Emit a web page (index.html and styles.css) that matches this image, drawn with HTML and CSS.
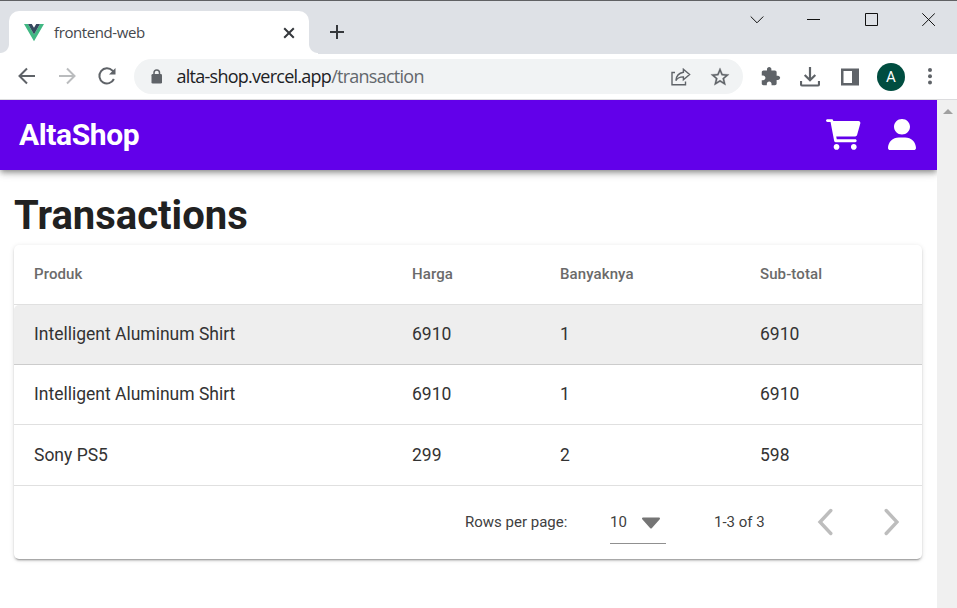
FILE: index.html
```html
<!DOCTYPE html>
<html lang="en">
<head>
<meta charset="utf-8">
<title>frontend-web</title>
<link rel="stylesheet" href="styles.css">
</head>
<body>
<div class="window">
  <div class="tabstrip">
    <div class="tab">
      <svg class="favicon" width="20" height="18" viewBox="0 0 20 18"><path fill="#41b883" d="M0 0h4l6 10.400 6-10.400h4L10 17.300z"/><path fill="#35495e" d="M4 0h3.800L10 3.800 12.200 0H16l-6 10.400z"/></svg>
      <span class="tab-title">frontend-web</span>
      <svg class="tab-close" width="12" height="12" viewBox="0 0 12 12"><path d="M1.200 1.200l9.600 9.600m0-9.600l-9.600 9.600" stroke="#35383c" stroke-width="2" fill="none"/></svg>
    </div>
    <svg class="new-tab" width="16" height="16" viewBox="0 0 16 16"><path d="M8 1v14M1 8h14" stroke="#35383c" stroke-width="2"/></svg>
    <div class="controls">
      <svg width="14" height="14" viewBox="0 0 14 14"><path d="M.7 4.500L7 10.800l6.300-6.300"/></svg>
      <svg width="14" height="14" viewBox="0 0 14 14"><path d="M0 7.500h13"/></svg>
      <svg width="14" height="14" viewBox="0 0 14 14"><path d="M1.500 1.500h12v12h-12z"/></svg>
      <svg width="14" height="14" viewBox="0 0 14 14"><path d="M1.300 1.300l12.600 12.600m0-12.600L1.300 13.900"/></svg>
    </div>
  </div>

  <div class="toolbar">
    <div class="nav">
      <svg width="24" height="24" viewBox="0 0 24 24"><path d="M20 12H5M12 4.500L4.500 12l7.500 7.500"/></svg>
      <svg class="off" width="24" height="24" viewBox="0 0 24 24"><path d="M4 12h15M12 4.500l7.500 7.500-7.500 7.500"/></svg>
      <svg width="24" height="24" viewBox="0 0 24 24"><path d="M18.900 15A7.600 7.600 0 1 1 17.500 6.600L19 8.300"/><path class="solid" d="M20.500 4v6.500H14z"/></svg>
    </div>
    <div class="omnibox">
      <svg class="lock" width="12" height="15" viewBox="0 0 12 15"><rect x=".5" y="5" width="10.500" height="9.500" rx="1.300" fill="#5f6368"/><path d="M3 5.500V3.700a2.750 2.750 0 0 1 5.500 0v1.800" fill="none" stroke="#5f6368" stroke-width="1.500"/></svg>
      <span class="url"><b>alta-shop.vercel.app</b>/transaction</span>
      <svg class="share" width="20" height="18" viewBox="0 0 20 18"><path d="M4 4.500H1v12.200h13.500V13.500"/><path d="M12.400 1.200l6.200 5.300-6.200 5.300V8.900c-3.600-.1-5.800 1-7.500 3.600.4-4.500 2.800-7.400 7.500-8.200z"/></svg>
      <svg class="star" width="22" height="22" viewBox="0 0 24 24"><path fill="#5f6368" stroke="#5f6368" stroke-width=".3" d="M22 9.240l-7.190-.62L12 2 9.190 8.630 2 9.240l5.460 4.730L5.820 21 12 17.270 18.180 21l-1.630-7.030L22 9.240zM12 15.400l-3.760 2.270 1-4.280-3.320-2.880 4.380-.38L12 6.100l1.710 4.040 4.380.38-3.320 2.880 1 4.280L12 15.400z"/></svg>
    </div>
    <div class="extras">
      <svg width="21" height="21" viewBox="0 0 24 24"><path fill="#5f6368" d="M20.500 11H19V7c0-1.100-.9-2-2-2h-4V3.500C13 2.120 11.880 1 10.500 1S8 2.120 8 3.500V5H4c-1.100 0-1.990.9-1.990 2v3.800H3.500c1.490 0 2.700 1.210 2.700 2.700s-1.210 2.700-2.700 2.700H2V20c0 1.100.9 2 2 2h3.800v-1.500c0-1.490 1.210-2.700 2.700-2.700s2.700 1.210 2.700 2.700V22H17c1.100 0 2-.9 2-2v-4h1.500c1.380 0 2.500-1.120 2.500-2.500S21.880 11 20.500 11z"/></svg>
      <svg width="20" height="20" viewBox="0 0 20 20"><path d="M10 0v13M4.700 8l5.300 5.300L15.300 8M1 14v3.200q0 1.300 1.300 1.300h15.400q1.300 0 1.300-1.300V14" fill="none" stroke="#5f6368" stroke-width="2.200"/></svg>
      <svg width="18" height="18" viewBox="0 0 18 18"><path fill="#5f6368" fill-rule="evenodd" d="M0 .5h18v17H0zM2.500 3v12H11V3z"/></svg>
      <span class="avatar">A</span>
      <svg width="6" height="18" viewBox="0 0 6 18"><g fill="#5f6368"><circle cx="3" cy="2" r="2"/><circle cx="3" cy="8.200" r="2"/><circle cx="3" cy="14.500" r="2"/></g></svg>
    </div>
  </div>

  <div class="viewport">
    <main class="page">
      <header class="appbar">
        <span class="brand">AltaShop</span>
        <svg width="34.500" height="31" viewBox="0 0 576 512"><path fill="#fff" d="M0 24C0 10.750 10.750 0 24 0H96C107.500 0 117.400 8.190 119.600 19.510L121.100 32H541.800C562.100 32 578.300 52.250 572.600 72.660L518.600 264.700C514.700 278.500 502.100 288 487.800 288H170.700L179.900 336H488C501.300 336 512 346.700 512 360C512 373.300 501.300 384 488 384H159.100C148.500 384 138.600 375.800 136.400 364.500L76.140 48H24C10.750 48 0 37.250 0 24zM128 464C128 437.500 149.500 416 176 416C202.500 416 224 437.500 224 464C224 490.500 202.500 512 176 512C149.500 512 128 490.500 128 464zM512 464C512 490.500 490.500 512 464 512C437.500 512 416 490.500 416 464C416 437.500 437.500 416 464 416C490.500 416 512 437.500 512 464z"/></svg>
        <svg class="user" width="28" height="31" viewBox="0 0 448 512" preserveAspectRatio="none"><path fill="#fff" d="M224 256c70.700 0 128-57.310 128-128s-57.300-128-128-128C153.300 0 96 57.310 96 128S153.300 256 224 256zM274.700 304H173.300C77.610 304 0 381.600 0 477.300c0 19.140 15.520 34.670 34.660 34.670h378.700C432.500 512 448 496.500 448 477.300C448 381.600 370.400 304 274.700 304z"/></svg>
      </header>
      <h1>Transactions</h1>
      <section class="card">
        <div class="row head"><span>Produk</span><span>Harga</span><span>Banyaknya</span><span>Sub-total</span></div>
        <div class="row hover"><span>Intelligent Aluminum Shirt</span><span>6910</span><span>1</span><span>6910</span></div>
        <div class="row"><span>Intelligent Aluminum Shirt</span><span>6910</span><span>1</span><span>6910</span></div>
        <div class="row last"><span>Sony PS5</span><span>299</span><span>2</span><span>598</span></div>
        <div class="footer">
          <span class="per-page">Rows per page:</span>
          <div class="select"><span>10</span><svg width="20" height="12" viewBox="0 0 20 12"><path d="M2 1.500h16L10 10.500z" fill="#757575" stroke="#757575" stroke-width="2" stroke-linejoin="round"/></svg></div>
          <span class="range">1-3 of 3</span>
          <svg class="prev" width="16" height="28" viewBox="0 0 16 28"><path d="M13.800 2.500L3 14l10.800 11.500"/></svg>
          <svg class="next" width="16" height="28" viewBox="0 0 16 28"><path d="M3.200 2.500L14 14 3.200 25.500"/></svg>
        </div>
      </section>
    </main>
    <div class="scrollbar"><svg width="10" height="5" viewBox="0 0 10 5"><path d="M5 0l5 5H0z" fill="#a0a0a0"/></svg></div>
  </div>
</div>
</body>
</html>
```
FILE: styles.css
```css
* { box-sizing: border-box; }
body { margin: 0; background: #fff; font-family: Roboto, sans-serif; overflow: hidden; }
svg { display: block; flex: none; }
span { white-space: nowrap; }
.window { width: 957px; height: 608px; display: flex; flex-direction: column; }

.tabstrip { height: 54px; flex: none; background: #dee1e6; border-top: 1px solid #606164; display: flex; padding: 10px 22px 0 9px; }
.tab { position: relative; width: 300px; height: 43px; background: #fff; border-radius: 10px 10px 0 0; display: flex; align-items: center; padding: 0 14px 0 15px; }
.tab::before, .tab::after { content: ""; position: absolute; bottom: 0; width: 9px; height: 10px; }
.tab::before { left: -9px; background: radial-gradient(circle at 0 0, transparent 8.500px, #fff 9.500px); }
.tab::after { right: -9px; background: radial-gradient(circle at 100% 0, transparent 8.500px, #fff 9.500px); }
.favicon { margin-top: 1px; }
.tab-title { flex: 1; margin: 0 0 2px 10px; font: 15px "Open Sans", sans-serif; letter-spacing: -.4px; color: #45484d; }
.new-tab { margin: 13px 0 0 19.500px; }
.controls { margin: 1px 0 0 auto; display: flex; gap: 43px; height: 14px; }
.controls svg { fill: none; stroke: #111; stroke-width: 1; }

.toolbar { height: 46px; flex: none; display: flex; align-items: flex-start; border-bottom: 1px solid #dcdcde; padding-top: 5px; }
.nav { width: 134px; display: flex; gap: 16px; padding: 5px 0 0 14.500px; }
.nav svg { fill: none; stroke: #5f6368; stroke-width: 2; }
.nav .off { stroke: #babcbe; }
.nav .solid { fill: #5f6368; stroke: none; }
.omnibox { width: 609px; height: 35px; border-radius: 18px; background: #f1f3f4; display: flex; align-items: center; padding: 0 12px 0 17px; }
.url { flex: 1; margin: 0 0 1px 13.500px; font: 18px "Open Sans", sans-serif; letter-spacing: -.74px; color: #63676c; }
.url b { font-weight: 400; color: #202124; }
.share { fill: none; stroke: #5f6368; stroke-width: 1.400; margin-right: 18px; }
.extras { display: flex; align-items: center; height: 35px; margin-left: 17px; }
.extras svg:nth-child(2) { margin-left: 19px; }
.extras svg:nth-child(3) { margin-left: 21px; }
.avatar { width: 28px; height: 28px; margin: 0 22px 0 18px; border-radius: 50%; background: #004d40; color: #fff; font-size: 15px; line-height: 28px; text-align: center; }

.viewport { flex: 1; display: flex; min-height: 0; }
.page { width: 937px; overflow: hidden; }
.scrollbar { width: 20px; background: #f0f0f0; padding: 9px 0 0 6px; }
.appbar { height: 70px; background: #6200ea; display: flex; align-items: center; padding: 0 21px 1px 19px; box-shadow: 0 2px 5px -1px rgba(0,0,0,.3), 0 4px 6px rgba(0,0,0,.18), 0 1px 12px rgba(0,0,0,.12); }
.brand { flex: 1; font-size: 30px; font-weight: 700; color: #fff; letter-spacing: -.4px; }
.user { margin-left: 27.500px; }
h1 { margin: 21px 0 0 14px; height: 54px; font-size: 40px; line-height: 50px; font-weight: 700; color: #212121; }
.card { width: 908px; height: 314px; margin-left: 14px; border-radius: 5px; background: #fff; box-shadow: 0 3px 1px -2px rgba(0,0,0,.2), 0 2px 2px rgba(0,0,0,.14), 0 1px 5px rgba(0,0,0,.12); }
.row { display: grid; grid-template-columns: 378px 148px 200px 162px; padding: 0 0 2px 20px; height: 60px; align-items: center; border-bottom: 1px solid #e0e0e0; font-size: 17.500px; color: #333; }
.head { font-size: 15px; font-weight: 500; letter-spacing: .1px; color: #6a6a6a; }
.hover { background: #eee; border-bottom-color: #ccc; border-radius: 5px 0 0; }
.last { height: 61px; padding-bottom: 0; }
.footer { height: 73px; display: flex; align-items: center; font-size: 15px; color: #404040; padding: 0 0 2px 451px; }
.per-page { width: 145px; }
.select { width: 56px; height: 44px; border-bottom: 1px solid #909090; display: flex; align-items: center; gap: 14px; }
.select svg { margin-top: 3px; }
.select span { margin-top: 2px; }
.range { width: 103px; margin-left: 48px; }
.prev, .next { fill: none; stroke: #bdbdbd; stroke-width: 3.400; stroke-linecap: round; }
.next { margin-left: 50px; }
```
